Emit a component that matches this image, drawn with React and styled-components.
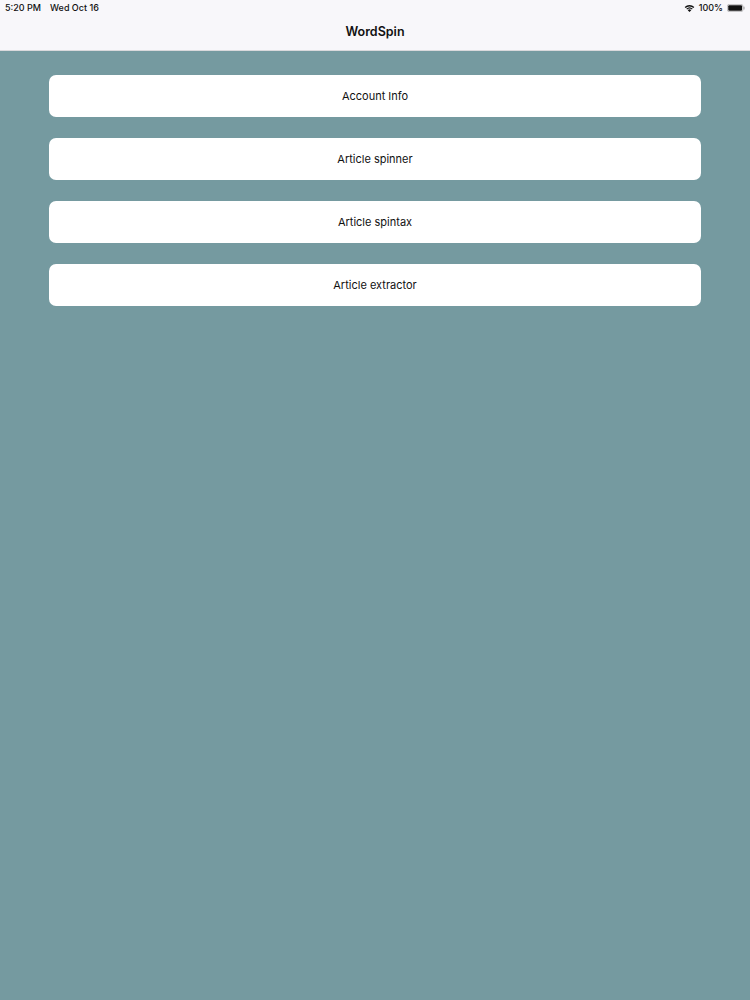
import React from "react";
import styled, { createGlobalStyle } from "styled-components";

const GlobalStyle = createGlobalStyle`
  html, body {
    margin: 0;
    padding: 0;
    background: #759aa0;
  }
  body {
    font-family: Inter, "Liberation Sans", Arial, sans-serif;
    -webkit-font-smoothing: antialiased;
  }
`;

const Screen = styled.div`
  width: 750px;
  min-height: 1000px;
  background: #759aa0;
  display: flex;
  flex-direction: column;
`;

const Header = styled.header`
  height: 50px;
  background: #f8f7fa;
  border-bottom: 1px solid #d9d9dc;
  display: flex;
  flex-direction: column;
`;

const StatusBar = styled.div`
  height: 15px;
  display: flex;
  align-items: center;
  justify-content: space-between;
  padding: 0 5px;
  font-size: 9px;
  font-weight: 500;
  color: #111;
`;

const StatusGroup = styled.div`
  display: flex;
  align-items: center;
  gap: ${(p) => p.gap || 4}px;
`;

const Title = styled.div`
  flex: 1;
  display: flex;
  align-items: center;
  justify-content: center;
  padding-bottom: 2px;
  font-size: 12.5px;
  font-weight: 600;
  color: #111;
`;

const List = styled.div`
  display: flex;
  flex-direction: column;
  gap: 21px;
  padding: 24px 49px 0;
`;

const MenuButton = styled.button`
  height: 42px;
  width: 100%;
  border: none;
  border-radius: 7px;
  background: #fff;
  font-family: inherit;
  font-size: 11px;
  color: #111;
  display: flex;
  align-items: center;
  justify-content: center;
  cursor: pointer;
`;

const Wifi = () => (
  <svg width="11" height="8" viewBox="0 0 22 16">
    <path d="M11 16 L7.5 12.3 A5 5 0 0 1 14.5 12.3 Z" fill="#111" />
    <path d="M4.5 9.3 A9.5 9.5 0 0 1 17.5 9.3 L15.7 11.2 A7 7 0 0 0 6.3 11.2 Z" fill="#111" />
    <path d="M1.3 6.1 A14 14 0 0 1 20.7 6.1 L18.8 8.1 A11.3 11.3 0 0 0 3.2 8.1 Z" fill="#111" />
  </svg>
);

const Battery = () => (
  <svg width="18" height="8" viewBox="0 0 36 16">
    <rect x="0.8" y="0.8" width="31" height="14.4" rx="3.5" fill="none" stroke="#999" strokeWidth="1.2" />
    <rect x="2.5" y="2.5" width="27.6" height="11" rx="2" fill="#111" />
    <rect x="33" y="5" width="2" height="6" rx="1" fill="#999" />
  </svg>
);

const items = ["Account Info", "Article spinner", "Article spintax", "Article extractor"];

export default function App() {
  return (
    <Screen>
      <GlobalStyle />
      <Header>
        <StatusBar>
          <StatusGroup gap={9}>
            <span>5:20 PM</span>
            <span>Wed Oct 16</span>
          </StatusGroup>
          <StatusGroup gap={4}>
            <Wifi />
            <span>100%</span>
            <Battery />
          </StatusGroup>
        </StatusBar>
        <Title>WordSpin</Title>
      </Header>
      <List>
        {items.map((label) => (
          <MenuButton key={label}>{label}</MenuButton>
        ))}
      </List>
    </Screen>
  );
}
